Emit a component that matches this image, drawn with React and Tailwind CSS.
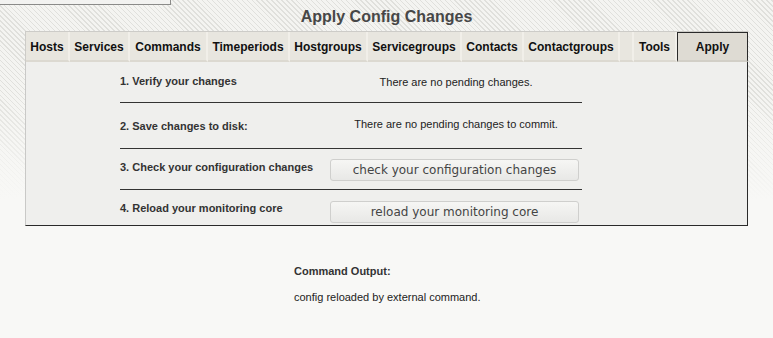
import React from 'react'

const tabs = [
  { name: 'Hosts', w: 'w-[44px]' },
  { name: 'Services', w: 'w-[60px]' },
  { name: 'Commands', w: 'w-[78px]' },
  { name: 'Timeperiods', w: 'w-[82px]' },
  { name: 'Hostgroups', w: 'w-[78px]' },
  { name: 'Servicegroups', w: 'w-[94px]' },
  { name: 'Contacts', w: 'w-[62px]' },
  { name: 'Contactgroups', w: 'w-[96px]' },
  { name: '', w: 'w-[14px]' },
  { name: 'Tools', w: 'w-[43px]' },
]

function ActionButton({ children }) {
  return (
    <button className="h-[22px] w-[249px] rounded-[3px] border border-[#cfcfcd] bg-[linear-gradient(to_bottom,#f6f6f4,#e8e8e6)] font-['DejaVu_Sans',sans-serif] text-[12px] leading-none text-[#444]">
      {children}
    </button>
  )
}

export default function App() {
  return (
    <div className="min-h-screen w-[773px] bg-[linear-gradient(to_bottom,transparent_90px,#f8f8f6_200px),repeating-linear-gradient(45deg,#e0e0dc_0px,#e0e0dc_1px,#f4f4f1_1px,#f4f4f1_3.5px)] bg-[#f8f8f6] font-['Liberation_Sans',Arial,sans-serif] text-[#222]">
      {/* leftover box from the page above */}
      <div className="h-[5px] w-[171px] border-r border-b border-[#8a8a88] bg-[#f2f2f0]" />

      <h1 className="mt-[3px] h-[23px] text-center text-[16px] font-bold leading-[18px] text-[#474747]">
        Apply Config Changes
      </h1>

      <div className="mx-[25px]">
        {/* tab bar */}
        <div className="flex h-[31px] border-t border-l border-[#cdccc8] bg-[#e8e6df]">
          {tabs.map((t, i) => (
            <div
              key={i}
              className={`${t.w} flex items-center justify-center border-r-2 border-b-2 border-r-[#f1efe9] border-b-[#dcd9d1] pt-[1px] text-[12px] font-bold text-[#111]`}
            >
              {t.name}
            </div>
          ))}
          <div className="flex flex-1 items-center justify-center border-x border-t border-[#2a2a2a] border-b-2 border-b-[#d2cfc7] bg-[#dedbd3] pt-[1px] text-[12px] font-bold text-[#111]">
            Apply
          </div>
        </div>

        {/* panel */}
        <div className="h-[164px] border-l border-r border-b border-l-[#c9c9c7] border-r-[#2a2a2a] border-b-[#2a2a2a] bg-[#efefed]">
          <div className="ml-[94px] w-[462px] text-[11px] leading-[13px]">
            <div className="flex h-[41px] border-b border-[#333]">
              <div className="w-[210px] pt-[13px] font-bold text-[#333]">1. Verify your changes</div>
              <div className="flex-1 pt-[14px] text-center">There are no pending changes.</div>
            </div>
            <div className="flex h-[46px] border-b border-[#333]">
              <div className="w-[210px] pt-[17px] font-bold text-[#333]">2. Save changes to disk:</div>
              <div className="flex-1 pt-[15px] text-center">There are no pending changes to commit.</div>
            </div>
            <div className="flex h-[41px] border-b border-[#333]">
              <div className="w-[210px] pt-[12px] font-bold text-[#333]">3. Check your configuration changes</div>
              <div className="pt-[10px]">
                <ActionButton>check your configuration changes</ActionButton>
              </div>
            </div>
            <div className="flex h-[34px]">
              <div className="w-[210px] pt-[12px] font-bold text-[#333]">4. Reload your monitoring core</div>
              <div className="pt-[11px]">
                <ActionButton>reload your monitoring core</ActionButton>
              </div>
            </div>
          </div>
        </div>
      </div>

      <div className="ml-[294px] pt-[39px] text-[11px] leading-[13px]">
        <div className="font-bold text-[#333]">Command Output:</div>
        <div className="mt-[13px]">config reloaded by external command.</div>
      </div>
    </div>
  )
}
